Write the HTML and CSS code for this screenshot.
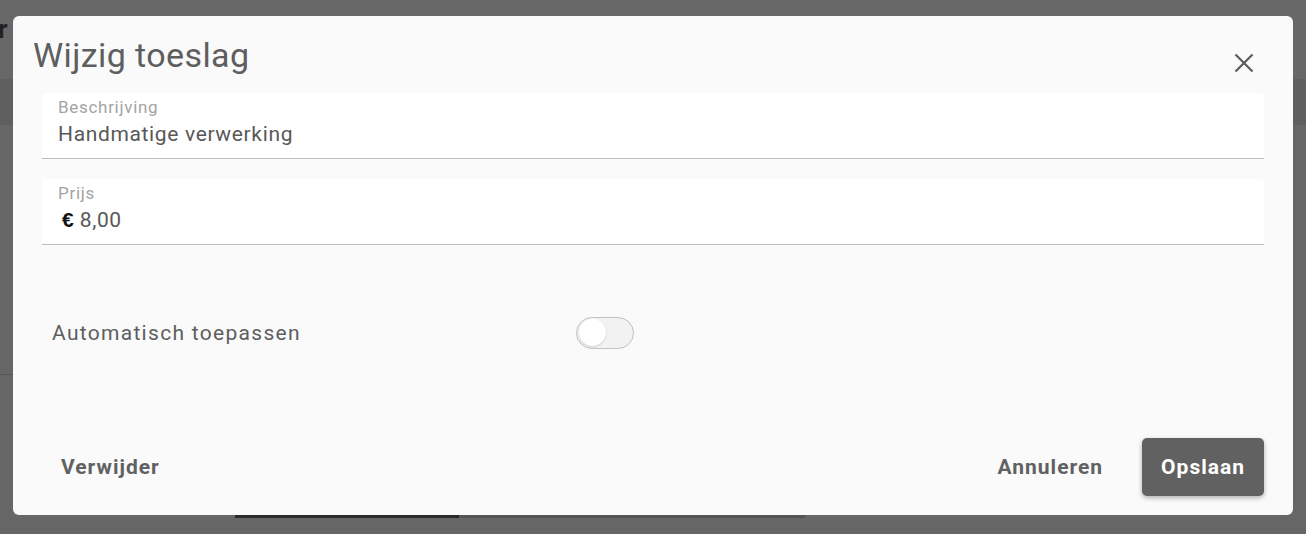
FILE: index.html
```html
<!DOCTYPE html>
<html lang="nl">
<head>
<meta charset="utf-8">
<title>Wijzig toeslag</title>
<link rel="stylesheet" href="styles.css">
</head>
<body>
<div class="page">
  <div class="page-header"><span class="page-title">r</span></div>
  <div class="page-toolbar"></div>
  <div class="page-content">
    <div class="page-rule"></div>
  </div>
  <div class="page-tabs">
    <div class="tab-active"></div>
    <div class="tab-rest"></div>
  </div>
</div>

<div class="overlay">
  <div class="dialog">
    <div class="dialog-header">
      <h1 class="dialog-title">Wijzig toeslag</h1>
      <button class="close-btn" aria-label="Sluiten">
        <svg width="20" height="20" viewBox="0 0 20 20"><path d="M1.5 1.5 L18.5 18.5 M18.5 1.5 L1.5 18.5" stroke="#5a5a5a" stroke-width="2.2" fill="none"/></svg>
      </button>
    </div>
    <div class="dialog-body">
      <div class="field">
        <div class="field-label">Beschrijving</div>
        <div class="field-value">Handmatige verwerking</div>
      </div>
      <div class="field">
        <div class="field-label">Prijs</div>
        <div class="field-value"><span class="euro">€</span>8,00</div>
      </div>
      <div class="toggle-row">
        <div class="toggle-label">Automatisch toepassen</div>
        <div class="toggle"><div class="toggle-thumb"></div></div>
      </div>
    </div>
    <div class="dialog-footer">
      <button class="btn btn-text">Verwijder</button>
      <div class="footer-right">
        <button class="btn btn-text">Annuleren</button>
        <button class="btn btn-primary">Opslaan</button>
      </div>
    </div>
  </div>
</div>
</body>
</html>
```
FILE: styles.css
```css
* { box-sizing: border-box; }
html, body { margin: 0; padding: 0; }
body {
  width: 1306px;
  height: 534px;
  overflow: hidden;
  background: #666666;
  font-family: Roboto, "Liberation Sans", Arial, sans-serif;
  position: relative;
}
.page { display: flex; flex-direction: column; height: 534px; }
.page-header {
  height: 79px;
  background: #686868;
  display: flex;
  align-items: flex-start;
  padding-top: 14px;
}
.page-title {
  font-size: 26px;
  line-height: 30px;
  font-weight: 700;
  color: #222;
  margin-left: -2px;
}
.page-toolbar { height: 46px; background: #5f5f5f; }
.page-content { height: 390px; padding-top: 249px; }
.page-rule { width: 600px; height: 1px; background: #555; }
.page-tabs { display: flex; padding-left: 235px; align-items: flex-start; }
.tab-active { width: 224px; height: 3px; background: #2b2b2b; }
.tab-rest { width: 346px; height: 3px; background: #555; }

.overlay {
  position: absolute;
  inset: 0;
  display: flex;
  justify-content: center;
  padding-top: 16px;
}
.dialog {
  width: 1280px;
  height: 499px;
  background: #fafafa;
  border-radius: 6px;
  display: flex;
  flex-direction: column;
}
.dialog-header {
  display: flex;
  justify-content: space-between;
  align-items: flex-start;
  padding: 19px 39px 0 20px;
}
.dialog-title {
  margin: 0;
  font-size: 34px;
  line-height: 40px;
  font-weight: 400;
  letter-spacing: 0.4px;
  color: #5e5e5e;
}
.close-btn {
  border: 0;
  background: none;
  padding: 0;
  margin-top: 18px;
  width: 20px;
  height: 20px;
  display: flex;
}
.dialog-body {
  padding: 18px 29px 0;
  display: flex;
  flex-direction: column;
  gap: 20px;
}
.field {
  height: 66px;
  background: #ffffff;
  border-radius: 4px 4px 0 0;
  border-bottom: 1px solid #bdbdbd;
  padding: 4px 16px 0;
}
.field-label {
  font-size: 17px;
  line-height: 20px;
  letter-spacing: 0.7px;
  color: #a3a3a3;
}
.field-value {
  font-size: 21px;
  line-height: 26px;
  letter-spacing: 0.65px;
  color: #585858;
  margin-top: 4px;
  display: flex;
  align-items: baseline;
}
.euro {
  color: #111;
  font-family: "Liberation Sans", Arial, sans-serif;
  font-weight: 700;
  font-size: 21px;
  letter-spacing: 0;
  margin-left: 4px;
  margin-right: 6px;
}
.toggle-row {
  display: flex;
  align-items: center;
  height: 135px;
  padding-left: 10px;
}
.toggle-label {
  width: 524px;
  font-size: 21px;
  letter-spacing: 1.3px;
  color: #5e5e5e;
}
.toggle {
  width: 58px;
  height: 32px;
  border-radius: 16px;
  background: #f2f2f2;
  border: 1px solid #c2c2c2;
  padding: 2px;
  display: flex;
  align-items: center;
}
.toggle-thumb {
  width: 27px;
  height: 27px;
  border-radius: 50%;
  background: #fff;
  box-shadow: 0 1px 2px rgba(0,0,0,0.15);
}
.dialog-footer {
  margin-top: auto;
  display: flex;
  justify-content: space-between;
  align-items: center;
  padding: 0 29px 19px 29px;
}
.footer-right { display: flex; gap: 20px; align-items: center; }
.btn {
  font-family: Roboto, "Liberation Sans", Arial, sans-serif;
  font-size: 21px;
  font-weight: 700;
  letter-spacing: 1px;
  height: 58px;
  padding: 0 19px;
  border: 0;
  border-radius: 5px;
  background: none;
  color: #616161;
  cursor: pointer;
}
.btn-primary {
  background: #616161;
  color: #ffffff;
  box-shadow: 0 2px 5px rgba(0,0,0,0.3);
}
```
